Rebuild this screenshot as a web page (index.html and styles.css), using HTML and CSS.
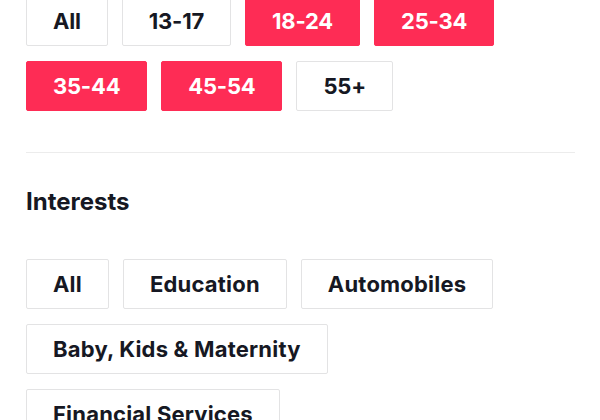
FILE: index.html
```html
<!DOCTYPE html>
<html lang="en">

<head>
    <meta charset="UTF-8">
    <meta name="viewport" content="width=device-width, initial-scale=1.0">
    <title>Targeting</title>
    <link rel="stylesheet" href="styles.css">
</head>

<body>
    <div class="panel">
        <div class="chips ages">
            <button class="chip">All</button>
            <button class="chip">13-17</button>
            <button class="chip on">18-24</button>
            <button class="chip on">25-34</button>
            <button class="chip on">35-44</button>
            <button class="chip on">45-54</button>
            <button class="chip">55+</button>
        </div>

        <hr class="divider">

        <h3>Interests</h3>

        <div class="chips">
            <button class="chip">All</button>
            <button class="chip">Education</button>
            <button class="chip">Automobiles</button>
            <button class="chip">Baby, Kids &amp; Maternity</button>
            <button class="chip">Financial Services</button>
        </div>
    </div>
</body>

</html>
```

FILE: styles.css
```css
body {
    margin: 0;
    background-color: #fff;
    color: #161823;
    font-family: 'Inter', 'Liberation Sans', sans-serif;
}

.panel {
    margin-top: -4px;
    padding: 0 25px 0 26px;
}

.chips {
    display: flex;
    flex-wrap: wrap;
    gap: 15px 14px;
}

.chip {
    height: 50px;
    padding: 0 26px;
    border: 1px solid #e3e3e4;
    border-radius: 2px;
    background-color: #fff;
    color: #161823;
    font-family: inherit;
    font-size: 22px;
    font-weight: 700;
    letter-spacing: 0.2px;
    cursor: pointer;
}

.ages .chip {
    letter-spacing: -0.2px;
}

.chip.on {
    background-color: #fe2c55;
    border-color: #fe2c55;
    color: #fff;
}

.divider {
    margin: 41px 0 0;
    border: none;
    border-top: 1px solid #ececec;
}

h3 {
    margin: 34px 0 42px;
    font-size: 24px;
    font-weight: 700;
    line-height: 30px;
}
```
